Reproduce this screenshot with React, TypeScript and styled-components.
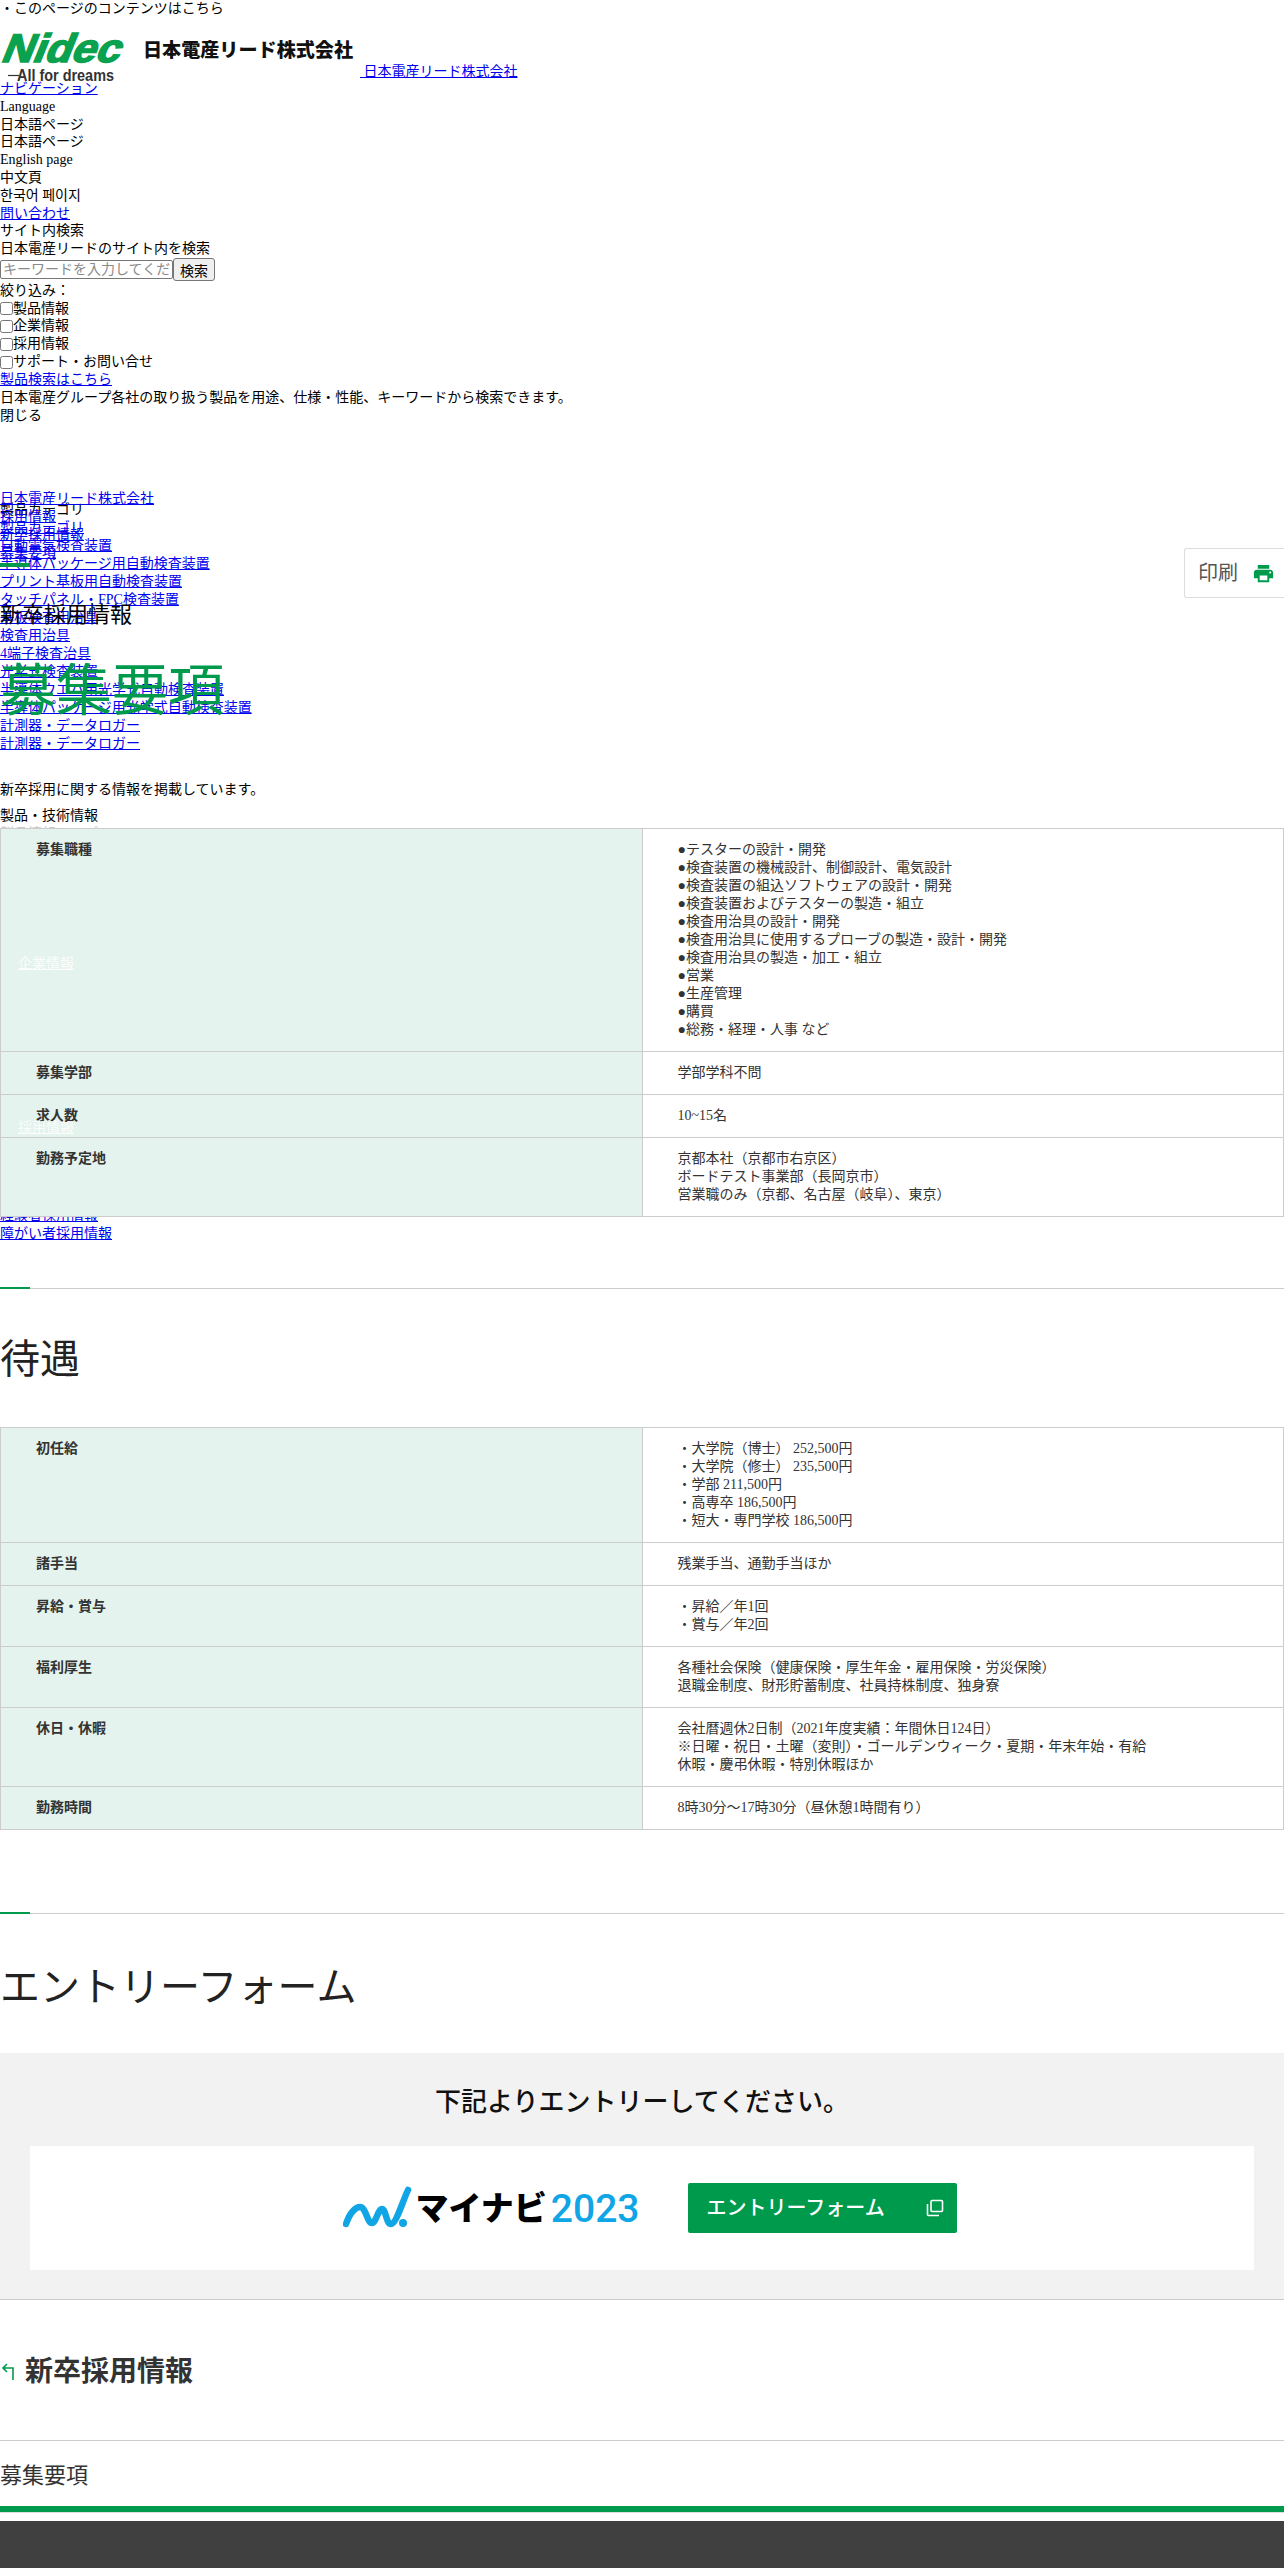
import React from 'react';
import styled, { createGlobalStyle } from 'styled-components';
import { MdPrint } from 'react-icons/md';

const GlobalStyle = createGlobalStyle`
  html, body {
    margin: 0;
    padding: 0;
    background: #fff;
  }
  body {
    font-family: "Liberation Serif", "Noto Sans CJK JP", serif;
    font-size: 14px;
    line-height: 18px;
    color: #000;
  }
`;

const GREEN = '#009a4d';
const SANS = '"Liberation Sans", "Noto Sans CJK JP", sans-serif';

const Page = styled.div`
  position: relative;
  width: 1284px;
  height: 2568px;
  overflow: hidden;
`;

/* unstyled navigation that runs down the page, the content lies over it */
const MenuLayer = styled.div`
  display: flex;
  flex-direction: column;
`;

const Row = styled.div`
  height: 18px;
  white-space: nowrap;
`;

const CompactRow = styled(Row)`
  height: 17.8px;
`;

const MenuLink = styled.a`
  color: #0000ee;
  text-decoration: underline;
`;

const Header = styled.div`
  display: flex;
  align-items: flex-end;
  height: 62px;
`;

const HeaderLink = styled.a`
  color: #0000ee;
  text-decoration: underline;
  white-space: pre;
  line-height: 18px;
  margin-bottom: -1px;
`;

const LogoSvg = styled.svg`
  display: block;
  width: 360px;
  height: 70px;
  margin-bottom: -2px;
  overflow: visible;
`;

const SearchRow = styled.div`
  display: flex;
  align-items: center;
  height: 24px;
`;

const SearchInput = styled.input`
  box-sizing: border-box;
  width: 173px;
  height: 19px;
  padding: 0 2px;
  border: 1px solid #767676;
  border-radius: 2px;
  font-family: inherit;
  font-size: 14px;
  &::placeholder {
    color: #8a8a8a;
  }
`;

const SearchButton = styled.button`
  box-sizing: border-box;
  width: 42px;
  height: 23px;
  padding: 0;
  background: #efefef;
  border: 1px solid #767676;
  border-radius: 3px;
  font-family: inherit;
  font-size: 14px;
  color: #000;
`;

const CheckRow = styled.label`
  display: flex;
  align-items: center;
  height: 17.8px;
`;

const Check = styled.input.attrs({ type: 'checkbox' })`
  width: 13px;
  height: 13px;
  margin: 0;
`;

const CloseRow = styled(CompactRow)`
  margin-bottom: 77px;
`;

const IntroRow = styled(Row)`
  margin-top: 28px;
`;

const CategoryRow = styled(Row)`
  margin-top: 8px;
`;

const FaintRow = styled(Row)`
  color: #c8c8c8;
`;

const RecruitRow = styled(Row)`
  margin-top: 364px;
`;

/* content column over the menu */
const ContentLayer = styled.div`
  position: absolute;
  top: 0;
  left: 0;
  right: 0;
  padding-top: 490px;
`;

const Crumb = styled.div`
  height: 18px;
`;

const CrumbBar = styled.div`
  width: 30px;
  height: 4px;
  margin-top: 1px;
  background: ${GREEN};
`;

const PageKicker = styled.div`
  margin-top: 35px;
  font-size: 22px;
  line-height: 26px;
  color: #000;
`;

const PageTitle = styled.h1`
  margin: 31px 0 0;
  font-size: 56px;
  line-height: 64px;
  font-weight: 400;
  color: ${GREEN};
`;

const InfoTable = styled.table`
  width: 100%;
  border-collapse: collapse;
  table-layout: fixed;
  background: #fff;
`;

const FirstTable = styled(InfoTable)`
  margin-top: 105px;
`;

const Th = styled.th`
  padding: 12px 35px;
  background: #e4f3ed;
  border: 1px solid #ccc;
  text-align: left;
  vertical-align: top;
  font-weight: 700;
  color: #333;
`;

const Td = styled.td`
  padding: 12px 35px;
  border: 1px solid #ccc;
  vertical-align: top;
  color: #333;
`;

const Cell = styled.div`
  white-space: pre-line;
`;

const SectionRule = styled.div<{ $top: number }>`
  display: flex;
  align-items: flex-end;
  height: 2px;
  margin-top: ${p => p.$top}px;
  &::before {
    content: '';
    width: 30px;
    height: 2px;
    background: ${GREEN};
  }
  &::after {
    content: '';
    flex: 1;
    height: 1px;
    background: #ccc;
  }
`;

const SectionTitle = styled.h2`
  margin: 46px 0 42px;
  font-size: 40px;
  line-height: 50px;
  font-weight: 400;
  color: #222;
`;

const EntryTitle = styled(SectionTitle)`
  margin: 49px 0 40px;
  letter-spacing: 0;
`;

const EntryBox = styled.div`
  box-sizing: border-box;
  height: 247px;
  padding: 32px 30px 0;
  background: #f2f2f2;
  border-bottom: 1px solid #ccc;
`;

const EntryLead = styled.p`
  margin: 0 0 27px;
  font-family: ${SANS};
  font-size: 26px;
  line-height: 34px;
  font-weight: 500;
  text-align: center;
  color: #111;
`;

const EntryPanel = styled.div`
  display: flex;
  align-items: center;
  justify-content: center;
  gap: 48px;
  height: 124px;
  padding-left: 16px;
  box-sizing: border-box;
  background: #fff;
`;

const Mynavi = styled.div`
  display: flex;
  align-items: flex-end;
  height: 46px;
  font-family: ${SANS};
`;

const MynaviWave = styled.svg`
  display: block;
  width: 72px;
  height: 48px;
`;

const MynaviName = styled.span`
  font-size: 33px;
  line-height: 44px;
  font-weight: 900;
  color: #000;
`;

const MynaviYear = styled.span`
  margin-left: 4px;
  font-family: Roboto, sans-serif;
  font-size: 39px;
  line-height: 44px;
  font-weight: 500;
  color: #10a5e4;
`;

const EntryButton = styled.a`
  box-sizing: border-box;
  display: flex;
  align-items: center;
  justify-content: space-between;
  width: 269px;
  height: 50px;
  padding: 0 13px 0 19px;
  background: ${GREEN};
  border-radius: 2px;
  font-family: ${SANS};
  font-size: 20px;
  font-weight: 500;
  color: #fff;
  text-decoration: none;
`;

const NewWindowIcon = styled.svg`
  display: block;
  width: 18px;
  height: 18px;
`;

const BackRow = styled.div`
  display: flex;
  align-items: center;
  gap: 8px;
  height: 141px;
  padding-top: 3px;
  box-sizing: border-box;
  border-bottom: 1px solid #ccc;
`;

const BackIcon = styled.svg`
  display: block;
  width: 17px;
  height: 20px;
`;

const BackLabel = styled.span`
  font-family: ${SANS};
  font-size: 28px;
  font-weight: 700;
  color: #333;
`;

const SubNav = styled.div`
  box-sizing: border-box;
  display: flex;
  align-items: center;
  height: 65px;
  padding-top: 4px;
  font-size: 22px;
  color: #333;
`;

const GreenBand = styled.div`
  height: 6px;
  background: ${GREEN};
  box-shadow: 0 1px 0 #ddd;
`;

const FooterBand = styled.div`
  height: 60px;
  margin-top: 9px;
  background: #404040;
`;

/* leftovers of the dark side menu, sitting on top of the table */
const GhostLink = styled.a<{ $top: number }>`
  position: absolute;
  left: 18px;
  top: ${p => p.$top}px;
  color: rgba(255, 255, 255, 0.85);
  text-decoration: underline;
`;

const PrintTab = styled.div`
  position: absolute;
  right: 0;
  top: 548px;
  box-sizing: border-box;
  display: flex;
  align-items: center;
  gap: 14px;
  width: 100px;
  height: 50px;
  padding-left: 13px;
  background: #fff;
  border: 1px solid #ddd;
  border-right: 0;
  border-radius: 3px 0 0 3px;
  font-family: ${SANS};
  font-size: 20px;
  color: #555;
  svg {
    color: ${GREEN};
    flex: none;
  }
`;

const langRows = ['Language', '日本語ページ', '日本語ページ', 'English page', '中文頁', '한국어 페이지'];
const filters = ['製品情報', '企業情報', '採用情報', 'サポート・お問い合せ'];
const productLinks = [
  '製品カテゴリ',
  '自動電気検査装置',
  '半導体パッケージ用自動検査装置',
  'プリント基板用自動検査装置',
  'タッチパネル・FPC検査装置',
  '基板検査用治具',
  '検査用治具',
  '4端子検査治具',
  '光学式検査装置',
  '半導体ウエハ用光学式自動検査装置',
  '半導体パッケージ用光学式自動検査装置',
  '計測器・データロガー',
  '計測器・データロガー',
];
const crumbs = ['日本電産リード株式会社', '採用情報', '新卒採用情報', '募集要項'];

const jobRows = [
  {
    head: '募集職種',
    body: `●テスターの設計・開発
●検査装置の機械設計、制御設計、電気設計
●検査装置の組込ソフトウェアの設計・開発
●検査装置およびテスターの製造・組立
●検査用治具の設計・開発
●検査用治具に使用するプローブの製造・設計・開発
●検査用治具の製造・加工・組立
●営業
●生産管理
●購買
●総務・経理・人事 など`,
  },
  { head: '募集学部', body: '学部学科不問' },
  { head: '求人数', body: '10~15名' },
  {
    head: '勤務予定地',
    body: `京都本社（京都市右京区）
ボードテスト事業部（長岡京市）
営業職のみ（京都、名古屋（岐阜）、東京）`,
  },
];

const benefitRows = [
  {
    head: '初任給',
    body: `・大学院（博士） 252,500円
・大学院（修士） 235,500円
・学部 211,500円
・高専卒 186,500円
・短大・専門学校 186,500円`,
  },
  { head: '諸手当', body: '残業手当、通勤手当ほか' },
  {
    head: '昇給・賞与',
    body: `・昇給／年1回
・賞与／年2回`,
  },
  {
    head: '福利厚生',
    body: `各種社会保険（健康保険・厚生年金・雇用保険・労災保険）
退職金制度、財形貯蓄制度、社員持株制度、独身寮`,
  },
  {
    head: '休日・休暇',
    body: `会社暦週休2日制（2021年度実績：年間休日124日）
※日曜・祝日・土曜（変則）・ゴールデンウィーク・夏期・年末年始・有給
休暇・慶弔休暇・特別休暇ほか`,
  },
  { head: '勤務時間', body: '8時30分～17時30分（昼休憩1時間有り）' },
];

const Logo = () => (
  <LogoSvg viewBox="0 0 360 70">
    <text
      x="20"
      y="50"
      transform="skewX(-22)"
      fontFamily="Liberation Sans"
      fontWeight="700"
      fontSize="40"
      fill="#0aa14f"
      stroke="#0aa14f"
      strokeWidth="1.6"
      textLength="118"
      lengthAdjust="spacingAndGlyphs"
    >
      Nidec
    </text>
    <text x="143" y="45" fontFamily="Noto Sans CJK JP" fontWeight="900" fontSize="19" fill="#111" textLength="210" lengthAdjust="spacingAndGlyphs">
      日本電産リード株式会社
    </text>
    <path d="M8 63.5h11" stroke="#333" strokeWidth="1.2" />
    <text x="17" y="69" fontFamily="Liberation Sans" fontWeight="700" fontSize="16" fill="#333" textLength="97" lengthAdjust="spacingAndGlyphs">
      All for dreams
    </text>
  </LogoSvg>
);

const InfoRows = ({ rows }: { rows: { head: string; body: string }[] }) => (
  <tbody>
    {rows.map(row => (
      <tr key={row.head}>
        <Th>{row.head}</Th>
        <Td>
          <Cell>{row.body}</Cell>
        </Td>
      </tr>
    ))}
  </tbody>
);

export default function App() {
  return (
    <>
      <GlobalStyle />
      <Page>
        <MenuLayer>
          <Row>・このページのコンテンツはこちら</Row>
          <Header>
            <Logo />
            <HeaderLink href="#"> 日本電産リード株式会社</HeaderLink>
          </Header>
          <CompactRow>
            <MenuLink href="#">ナビゲーション</MenuLink>
          </CompactRow>
          {langRows.map((label, i) => (
            <CompactRow key={i}>{label}</CompactRow>
          ))}
          <CompactRow>
            <MenuLink href="#">問い合わせ</MenuLink>
          </CompactRow>
          <CompactRow>サイト内検索</CompactRow>
          <CompactRow>日本電産リードのサイト内を検索</CompactRow>
          <SearchRow>
            <SearchInput placeholder="キーワードを入力してください" />
            <SearchButton>検索</SearchButton>
          </SearchRow>
          <CompactRow>絞り込み：</CompactRow>
          {filters.map(label => (
            <CheckRow key={label}>
              <Check />
              {label}
            </CheckRow>
          ))}
          <CompactRow>
            <MenuLink href="#">製品検索はこちら</MenuLink>
          </CompactRow>
          <CompactRow>日本電産グループ各社の取り扱う製品を用途、仕様・性能、キーワードから検索できます。</CompactRow>
          <CloseRow>閉じる</CloseRow>
          <Row>製品カテゴリ</Row>
          {productLinks.map((label, i) => (
            <Row key={i}>
              <MenuLink href="#">{label}</MenuLink>
            </Row>
          ))}
          <IntroRow>新卒採用に関する情報を掲載しています。</IntroRow>
          <CategoryRow>製品・技術情報</CategoryRow>
          <FaintRow>製品情報トップ</FaintRow>
          <RecruitRow>
            <MenuLink href="#">経験者採用情報</MenuLink>
          </RecruitRow>
          <Row>
            <MenuLink href="#">障がい者採用情報</MenuLink>
          </Row>
        </MenuLayer>

        <ContentLayer>
          {crumbs.map(label => (
            <Crumb key={label}>
              <MenuLink href="#">{label}</MenuLink>
            </Crumb>
          ))}
          <CrumbBar />
          <PageKicker>新卒採用情報</PageKicker>
          <PageTitle>募集要項</PageTitle>
          <FirstTable>
            <InfoRows rows={jobRows} />
          </FirstTable>

          <SectionRule $top={70} />
          <SectionTitle>待遇</SectionTitle>
          <InfoTable>
            <InfoRows rows={benefitRows} />
          </InfoTable>

          <SectionRule $top={82} />
          <EntryTitle>エントリーフォーム</EntryTitle>
          <EntryBox>
            <EntryLead>下記よりエントリーしてください。</EntryLead>
            <EntryPanel>
              <Mynavi>
                <MynaviWave viewBox="0 0 72 48">
                  <path
                    d="M3 41C7 29 13 24 17 24C23 24 24 40 29 40C33 40 35 26 39 26C43 26 43 41 48 41C53 41 59 20 65 7"
                    fill="none"
                    stroke="#10a5e4"
                    strokeWidth="6.5"
                    strokeLinecap="round"
                  />
                  <circle cx="60" cy="40" r="4" fill="#10a5e4" />
                </MynaviWave>
                <MynaviName>マイナビ</MynaviName>
                <MynaviYear>2023</MynaviYear>
              </Mynavi>
              <EntryButton href="#">
                エントリーフォーム
                <NewWindowIcon viewBox="0 0 18 18" fill="none" stroke="#fff" strokeWidth="1.6">
                  <rect x="5" y="1.5" width="11.5" height="11" rx="1" />
                  <path d="M1.5 5v10.5a1 1 0 0 0 1 1H13" />
                </NewWindowIcon>
              </EntryButton>
            </EntryPanel>
          </EntryBox>

          <BackRow>
            <BackIcon viewBox="0 0 17 20" fill="none" stroke={GREEN} strokeWidth="1.6">
              <path d="M13 18V6H3M7 2L3 6l4 4" />
            </BackIcon>
            <BackLabel>新卒採用情報</BackLabel>
          </BackRow>
          <SubNav>募集要項</SubNav>
          <GreenBand />
          <FooterBand />
        </ContentLayer>

        <GhostLink href="#" $top={955}>
          企業情報
        </GhostLink>
        <GhostLink href="#" $top={1119}>
          採用情報
        </GhostLink>

        <PrintTab>
          印刷
          <MdPrint size={23} />
        </PrintTab>
      </Page>
    </>
  );
}
